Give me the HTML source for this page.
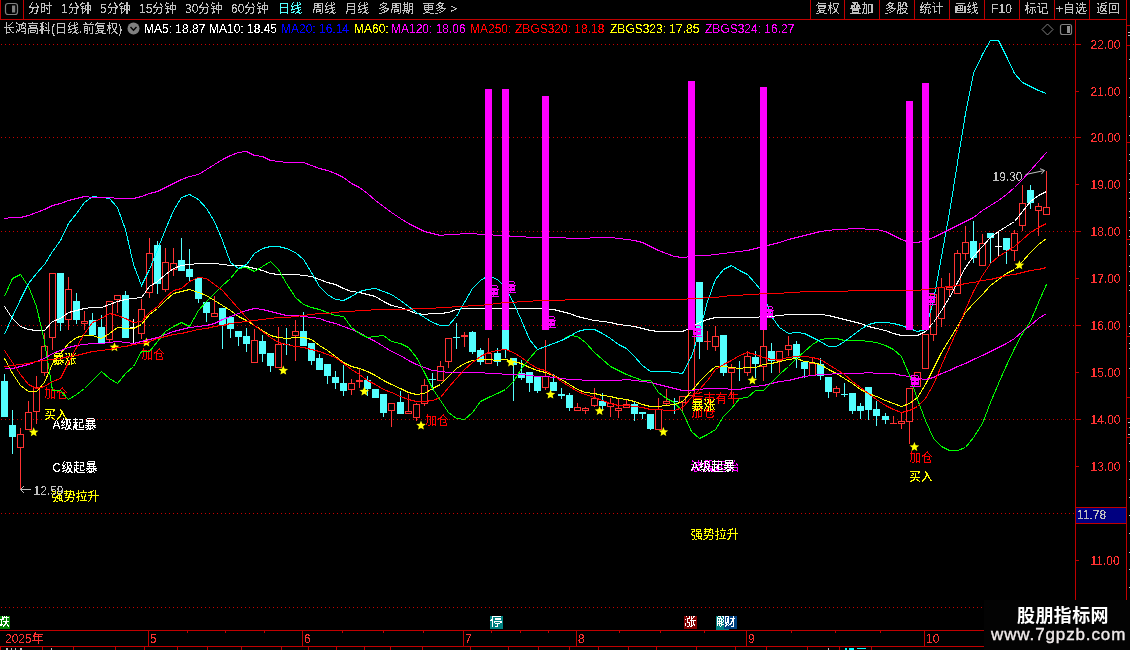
<!DOCTYPE html>
<html lang="zh-CN"><head><meta charset="utf-8"><title>长鸿高科 日线</title>
<style>
html,body{margin:0;padding:0;background:#000;}
body{width:1130px;height:650px;overflow:hidden;position:relative;font-family:"Liberation Sans","Noto Sans CJK SC",sans-serif;font-size:12px;color:#c0c0c0;}
#chart{position:absolute;left:0;top:0;width:1130px;height:650px;}
.t12{font-family:"Liberation Sans","Noto Sans CJK SC",sans-serif;font-size:12px;}
.a12{font-family:"Liberation Sans",sans-serif;font-size:12px;}
.ab{position:absolute;white-space:nowrap;line-height:14px;height:14px;}
#topbar{position:absolute;left:0;top:0;width:1127px;height:19px;border-bottom:1px solid #c00000;box-sizing:content-box;}
.vs{position:absolute;top:0;width:1px;height:19px;background:#c00000;}
.tab,.btn,.ab12,.tag span{filter:url(#thr);}
.tab{position:absolute;top:2px;font-size:12px;line-height:15px;color:#c0c0c0;white-space:nowrap;}
.btn{position:absolute;top:2px;width:35px;text-align:center;font-size:12px;line-height:15px;color:#c0c0c0;white-space:nowrap;}
.tag{position:absolute;top:616px;height:13px;overflow:hidden;color:#fff;font-size:12px;line-height:13px;white-space:nowrap;}
#topbar,#info,#wm,.tag{will-change:transform;}
#wm{position:absolute;left:984px;top:600px;width:146px;height:50px;background:#030303;}
</style></head><body>
<svg id="chart" width="1130" height="650" viewBox="0 0 1130 650" shape-rendering="auto">
<defs><filter id="thr" x="0" y="0" width="100%" height="100%" color-interpolation-filters="sRGB"><feComponentTransfer><feFuncA type="discrete" tableValues="0 0 0 0 1 1 1 1 1"/></feComponentTransfer></filter></defs>
<line x1="1" y1="44.5" x2="1075" y2="44.5" stroke="#c80000" stroke-width="1" stroke-dasharray="1 3" shape-rendering="crispEdges"/>
<line x1="1" y1="137.5" x2="1075" y2="137.5" stroke="#c80000" stroke-width="1" stroke-dasharray="1 3" shape-rendering="crispEdges"/>
<line x1="1" y1="231.5" x2="1075" y2="231.5" stroke="#c80000" stroke-width="1" stroke-dasharray="1 3" shape-rendering="crispEdges"/>
<line x1="1" y1="325.5" x2="1075" y2="325.5" stroke="#c80000" stroke-width="1" stroke-dasharray="1 3" shape-rendering="crispEdges"/>
<line x1="1" y1="419.5" x2="1075" y2="419.5" stroke="#c80000" stroke-width="1" stroke-dasharray="1 3" shape-rendering="crispEdges"/>
<line x1="1" y1="513.5" x2="1075" y2="513.5" stroke="#c80000" stroke-width="1" stroke-dasharray="1 3" shape-rendering="crispEdges"/>
<line x1="1" y1="607.5" x2="984" y2="607.5" stroke="#c80000" stroke-width="1" stroke-dasharray="1 3" shape-rendering="crispEdges"/>
<rect x="4" y="374.0" width="1" height="43.0" fill="#54ffff"/>
<rect x="1" y="381.0" width="7" height="36.0" fill="#54ffff"/>
<rect x="12" y="410.0" width="1" height="44.0" fill="#54ffff"/>
<rect x="9" y="425.0" width="7" height="12.0" fill="#54ffff"/>
<rect x="20" y="428.0" width="1" height="6.0" fill="#ff3232"/>
<rect x="20" y="448.0" width="1" height="41.0" fill="#ff3232"/>
<rect x="17.5" y="434.5" width="6" height="13.0" fill="#000" stroke="#ff3232" stroke-width="1"/>
<rect x="28" y="401.0" width="1" height="11.0" fill="#ff3232"/>
<rect x="25.5" y="412.5" width="6" height="17.0" fill="#000" stroke="#ff3232" stroke-width="1"/>
<rect x="36" y="376.0" width="1" height="11.0" fill="#ff3232"/>
<rect x="36" y="412.0" width="1" height="12.0" fill="#ff3232"/>
<rect x="33.5" y="387.5" width="6" height="24.0" fill="#000" stroke="#ff3232" stroke-width="1"/>
<rect x="44" y="333.0" width="1" height="13.0" fill="#ff3232"/>
<rect x="44" y="373.0" width="1" height="3.0" fill="#ff3232"/>
<rect x="41.5" y="346.5" width="6" height="26.0" fill="#000" stroke="#ff3232" stroke-width="1"/>
<rect x="52" y="338.0" width="1" height="12.0" fill="#ff3232"/>
<rect x="49.5" y="273.5" width="6" height="64.0" fill="#000" stroke="#ff3232" stroke-width="1"/>
<rect x="60" y="273.0" width="1" height="58.0" fill="#54ffff"/>
<rect x="57" y="273.0" width="7" height="50.0" fill="#54ffff"/>
<rect x="68" y="277.0" width="1" height="12.0" fill="#ff3232"/>
<rect x="68" y="320.0" width="1" height="10.0" fill="#ff3232"/>
<rect x="65.5" y="289.5" width="6" height="30.0" fill="#000" stroke="#ff3232" stroke-width="1"/>
<rect x="76" y="293.0" width="1" height="31.0" fill="#54ffff"/>
<rect x="73" y="301.0" width="7" height="19.0" fill="#54ffff"/>
<rect x="84" y="311.0" width="1" height="10.0" fill="#ff3232"/>
<rect x="84" y="324.0" width="1" height="6.0" fill="#ff3232"/>
<rect x="81.5" y="321.5" width="6" height="2.0" fill="#000" stroke="#ff3232" stroke-width="1"/>
<rect x="92" y="313.0" width="1" height="22.0" fill="#54ffff"/>
<rect x="89" y="320.0" width="7" height="15.0" fill="#54ffff"/>
<rect x="101" y="315.0" width="1" height="28.0" fill="#54ffff"/>
<rect x="98" y="327.0" width="7" height="16.0" fill="#54ffff"/>
<rect x="109" y="340.0" width="1" height="2.0" fill="#ff3232"/>
<rect x="106.5" y="301.5" width="6" height="38.0" fill="#000" stroke="#ff3232" stroke-width="1"/>
<rect x="117" y="300.0" width="1" height="13.0" fill="#ff3232"/>
<rect x="114.5" y="295.5" width="6" height="4.0" fill="#000" stroke="#ff3232" stroke-width="1"/>
<rect x="125" y="291.0" width="1" height="47.0" fill="#54ffff"/>
<rect x="122" y="295.0" width="7" height="43.0" fill="#54ffff"/>
<rect x="133" y="319.0" width="1" height="24.0" fill="#ffffff"/>
<rect x="130" y="327" width="7" height="1" fill="#ffffff"/>
<rect x="141" y="299.0" width="1" height="10.0" fill="#ff3232"/>
<rect x="141" y="334.0" width="1" height="5.0" fill="#ff3232"/>
<rect x="138.5" y="309.5" width="6" height="24.0" fill="#000" stroke="#ff3232" stroke-width="1"/>
<rect x="149" y="238.0" width="1" height="15.0" fill="#ff3232"/>
<rect x="149" y="293.0" width="1" height="5.0" fill="#ff3232"/>
<rect x="146.5" y="253.5" width="6" height="39.0" fill="#000" stroke="#ff3232" stroke-width="1"/>
<rect x="157" y="241.0" width="1" height="53.0" fill="#54ffff"/>
<rect x="154" y="245.0" width="7" height="39.0" fill="#54ffff"/>
<rect x="165" y="248.0" width="1" height="14.0" fill="#ff3232"/>
<rect x="165" y="290.0" width="1" height="2.0" fill="#ff3232"/>
<rect x="162.5" y="262.5" width="6" height="27.0" fill="#000" stroke="#ff3232" stroke-width="1"/>
<rect x="173" y="248.0" width="1" height="15.0" fill="#ff3232"/>
<rect x="173" y="270.0" width="1" height="6.0" fill="#ff3232"/>
<rect x="170.5" y="263.5" width="6" height="6.0" fill="#000" stroke="#ff3232" stroke-width="1"/>
<rect x="181" y="238.0" width="1" height="33.0" fill="#54ffff"/>
<rect x="178" y="260.0" width="7" height="11.0" fill="#54ffff"/>
<rect x="189" y="249.0" width="1" height="33.0" fill="#54ffff"/>
<rect x="186" y="269.0" width="7" height="8.0" fill="#54ffff"/>
<rect x="198" y="278.0" width="1" height="25.0" fill="#54ffff"/>
<rect x="195" y="278.0" width="7" height="21.0" fill="#54ffff"/>
<rect x="206" y="302.0" width="1" height="20.0" fill="#54ffff"/>
<rect x="203" y="302.0" width="7" height="11.0" fill="#54ffff"/>
<rect x="214" y="296.0" width="1" height="17.0" fill="#ff3232"/>
<rect x="211.5" y="313.5" width="6" height="3.0" fill="#000" stroke="#ff3232" stroke-width="1"/>
<rect x="222" y="308.0" width="1" height="41.0" fill="#54ffff"/>
<rect x="219" y="308.0" width="7" height="17.0" fill="#54ffff"/>
<rect x="230" y="317.0" width="1" height="21.0" fill="#54ffff"/>
<rect x="227" y="317.0" width="7" height="12.0" fill="#54ffff"/>
<rect x="238" y="331.0" width="1" height="15.0" fill="#54ffff"/>
<rect x="235" y="331.0" width="7" height="6.0" fill="#54ffff"/>
<rect x="246" y="328.0" width="1" height="24.0" fill="#54ffff"/>
<rect x="243" y="336.0" width="7" height="8.0" fill="#54ffff"/>
<rect x="254" y="329.0" width="1" height="11.0" fill="#ff3232"/>
<rect x="251.5" y="340.5" width="6" height="22.0" fill="#000" stroke="#ff3232" stroke-width="1"/>
<rect x="262" y="335.0" width="1" height="27.0" fill="#54ffff"/>
<rect x="259" y="341.0" width="7" height="13.0" fill="#54ffff"/>
<rect x="270" y="353.0" width="1" height="19.0" fill="#54ffff"/>
<rect x="267" y="353.0" width="7" height="13.0" fill="#54ffff"/>
<rect x="278" y="327.0" width="1" height="17.0" fill="#ff3232"/>
<rect x="275.5" y="344.5" width="6" height="23.0" fill="#000" stroke="#ff3232" stroke-width="1"/>
<rect x="286" y="328.0" width="1" height="27.0" fill="#54ffff"/>
<rect x="283" y="344" width="7" height="1" fill="#54ffff"/>
<rect x="295" y="320.0" width="1" height="11.0" fill="#ff3232"/>
<rect x="295" y="336.0" width="1" height="25.0" fill="#ff3232"/>
<rect x="292.5" y="331.5" width="6" height="4.0" fill="#000" stroke="#ff3232" stroke-width="1"/>
<rect x="303" y="312.0" width="1" height="34.0" fill="#54ffff"/>
<rect x="300" y="331.0" width="7" height="15.0" fill="#54ffff"/>
<rect x="311" y="343.0" width="1" height="22.0" fill="#54ffff"/>
<rect x="308" y="343.0" width="7" height="18.0" fill="#54ffff"/>
<rect x="319" y="354.0" width="1" height="16.0" fill="#54ffff"/>
<rect x="316" y="358.0" width="7" height="12.0" fill="#54ffff"/>
<rect x="327" y="364.0" width="1" height="20.0" fill="#54ffff"/>
<rect x="324" y="364.0" width="7" height="12.0" fill="#54ffff"/>
<rect x="335" y="371.0" width="1" height="18.0" fill="#54ffff"/>
<rect x="332" y="377.0" width="7" height="6.0" fill="#54ffff"/>
<rect x="343" y="365.0" width="1" height="31.0" fill="#54ffff"/>
<rect x="340" y="383.0" width="7" height="8.0" fill="#54ffff"/>
<rect x="351" y="379.0" width="1" height="4.0" fill="#ff3232"/>
<rect x="351" y="390.0" width="1" height="5.0" fill="#ff3232"/>
<rect x="348.5" y="383.5" width="6" height="6.0" fill="#000" stroke="#ff3232" stroke-width="1"/>
<rect x="359" y="368.0" width="1" height="12.0" fill="#ff3232"/>
<rect x="359" y="382.0" width="1" height="6.0" fill="#ff3232"/>
<rect x="356.5" y="380.5" width="6" height="1.0" fill="#000" stroke="#ff3232" stroke-width="1"/>
<rect x="367" y="376.0" width="1" height="20.0" fill="#54ffff"/>
<rect x="364" y="380.0" width="7" height="9.0" fill="#54ffff"/>
<rect x="375" y="389.0" width="1" height="9.0" fill="#54ffff"/>
<rect x="372" y="389.0" width="7" height="9.0" fill="#54ffff"/>
<rect x="383" y="394.0" width="1" height="23.0" fill="#54ffff"/>
<rect x="380" y="394.0" width="7" height="19.0" fill="#54ffff"/>
<rect x="391" y="411.0" width="1" height="16.0" fill="#ff3232"/>
<rect x="388.5" y="403.5" width="6" height="7.0" fill="#000" stroke="#ff3232" stroke-width="1"/>
<rect x="400" y="391.0" width="1" height="23.0" fill="#54ffff"/>
<rect x="397" y="402.0" width="7" height="12.0" fill="#54ffff"/>
<rect x="408" y="394.0" width="1" height="17.0" fill="#ff3232"/>
<rect x="405.5" y="411.5" width="6" height="2.0" fill="#000" stroke="#ff3232" stroke-width="1"/>
<rect x="416" y="403.0" width="1" height="1.0" fill="#ff3232"/>
<rect x="416" y="418.0" width="1" height="3.0" fill="#ff3232"/>
<rect x="413.5" y="404.5" width="6" height="13.0" fill="#000" stroke="#ff3232" stroke-width="1"/>
<rect x="424" y="379.0" width="1" height="6.0" fill="#ff3232"/>
<rect x="424" y="404.0" width="1" height="2.0" fill="#ff3232"/>
<rect x="421.5" y="385.5" width="6" height="18.0" fill="#000" stroke="#ff3232" stroke-width="1"/>
<rect x="432" y="373.0" width="1" height="17.0" fill="#54ffff"/>
<rect x="429" y="379" width="7" height="1" fill="#54ffff"/>
<rect x="440" y="361.0" width="1" height="5.0" fill="#ff3232"/>
<rect x="437.5" y="366.5" width="6" height="14.0" fill="#000" stroke="#ff3232" stroke-width="1"/>
<rect x="448" y="362.0" width="1" height="6.0" fill="#ff3232"/>
<rect x="445.5" y="338.5" width="6" height="23.0" fill="#000" stroke="#ff3232" stroke-width="1"/>
<rect x="456" y="323.0" width="1" height="26.0" fill="#54ffff"/>
<rect x="453" y="337" width="7" height="1" fill="#54ffff"/>
<rect x="464" y="332.0" width="1" height="3.0" fill="#ff3232"/>
<rect x="464" y="337.0" width="1" height="10.0" fill="#ff3232"/>
<rect x="461.5" y="335.5" width="6" height="1.0" fill="#000" stroke="#ff3232" stroke-width="1"/>
<rect x="472" y="331.0" width="1" height="23.0" fill="#54ffff"/>
<rect x="469" y="332.0" width="7" height="20.0" fill="#54ffff"/>
<rect x="480" y="348.0" width="1" height="17.0" fill="#54ffff"/>
<rect x="477" y="350.0" width="7" height="12.0" fill="#54ffff"/>
<rect x="488" y="338.0" width="1" height="15.0" fill="#ff3232"/>
<rect x="485.5" y="353.5" width="6" height="10.0" fill="#000" stroke="#ff3232" stroke-width="1"/>
<rect x="497" y="348.0" width="1" height="18.0" fill="#54ffff"/>
<rect x="494" y="353.0" width="7" height="9.0" fill="#54ffff"/>
<rect x="505" y="330.0" width="1" height="28.0" fill="#54ffff"/>
<rect x="502" y="330.0" width="7" height="20.0" fill="#54ffff"/>
<rect x="513" y="358.0" width="1" height="43.0" fill="#54ffff"/>
<rect x="510" y="358.0" width="7" height="7.0" fill="#54ffff"/>
<rect x="521" y="360.0" width="1" height="20.0" fill="#54ffff"/>
<rect x="518" y="373.0" width="7" height="5.0" fill="#54ffff"/>
<rect x="529" y="372.0" width="1" height="20.0" fill="#54ffff"/>
<rect x="526" y="372.0" width="7" height="11.0" fill="#54ffff"/>
<rect x="537" y="376.0" width="1" height="17.0" fill="#54ffff"/>
<rect x="534" y="376.0" width="7" height="15.0" fill="#54ffff"/>
<rect x="545" y="340.0" width="1" height="36.0" fill="#ff3232"/>
<rect x="545" y="388.0" width="1" height="2.0" fill="#ff3232"/>
<rect x="542.5" y="376.5" width="6" height="11.0" fill="#000" stroke="#ff3232" stroke-width="1"/>
<rect x="553" y="374.0" width="1" height="17.0" fill="#54ffff"/>
<rect x="550" y="382.0" width="7" height="9.0" fill="#54ffff"/>
<rect x="561" y="388.0" width="1" height="11.0" fill="#54ffff"/>
<rect x="558" y="394.0" width="7" height="2.0" fill="#54ffff"/>
<rect x="569" y="393.0" width="1" height="18.0" fill="#54ffff"/>
<rect x="566" y="395.0" width="7" height="13.0" fill="#54ffff"/>
<rect x="577" y="403.0" width="1" height="4.0" fill="#ff3232"/>
<rect x="574.5" y="407.5" width="6" height="3.0" fill="#000" stroke="#ff3232" stroke-width="1"/>
<rect x="585" y="407.0" width="1" height="1.0" fill="#ff3232"/>
<rect x="585" y="411.0" width="1" height="3.0" fill="#ff3232"/>
<rect x="582.5" y="408.5" width="6" height="2.0" fill="#000" stroke="#ff3232" stroke-width="1"/>
<rect x="594" y="388.0" width="1" height="10.0" fill="#ff3232"/>
<rect x="594" y="406.0" width="1" height="1.0" fill="#ff3232"/>
<rect x="591.5" y="398.5" width="6" height="7.0" fill="#000" stroke="#ff3232" stroke-width="1"/>
<rect x="602" y="393.0" width="1" height="18.0" fill="#54ffff"/>
<rect x="599" y="401.0" width="7" height="5.0" fill="#54ffff"/>
<rect x="610" y="398.0" width="1" height="5.0" fill="#ff3232"/>
<rect x="610" y="407.0" width="1" height="10.0" fill="#ff3232"/>
<rect x="607.5" y="403.5" width="6" height="3.0" fill="#000" stroke="#ff3232" stroke-width="1"/>
<rect x="618" y="399.0" width="1" height="9.0" fill="#ff3232"/>
<rect x="618" y="411.0" width="1" height="7.0" fill="#ff3232"/>
<rect x="615.5" y="408.5" width="6" height="2.0" fill="#000" stroke="#ff3232" stroke-width="1"/>
<rect x="626" y="400.0" width="1" height="4.0" fill="#ff3232"/>
<rect x="623.5" y="404.5" width="6" height="3.0" fill="#000" stroke="#ff3232" stroke-width="1"/>
<rect x="634" y="402.0" width="1" height="19.0" fill="#54ffff"/>
<rect x="631" y="404.0" width="7" height="10.0" fill="#54ffff"/>
<rect x="642" y="412.0" width="1" height="7.0" fill="#54ffff"/>
<rect x="639" y="412.0" width="7" height="2.0" fill="#54ffff"/>
<rect x="650" y="414.0" width="1" height="16.0" fill="#54ffff"/>
<rect x="647" y="414.0" width="7" height="15.0" fill="#54ffff"/>
<rect x="658" y="398.0" width="1" height="11.0" fill="#ff3232"/>
<rect x="655.5" y="409.5" width="6" height="20.0" fill="#000" stroke="#ff3232" stroke-width="1"/>
<rect x="666" y="389.0" width="1" height="12.0" fill="#ff3232"/>
<rect x="666" y="404.0" width="1" height="1.0" fill="#ff3232"/>
<rect x="663.5" y="401.5" width="6" height="2.0" fill="#000" stroke="#ff3232" stroke-width="1"/>
<rect x="674" y="398.0" width="1" height="16.0" fill="#54ffff"/>
<rect x="671" y="401" width="7" height="1" fill="#54ffff"/>
<rect x="682" y="403.0" width="1" height="8.0" fill="#ff3232"/>
<rect x="679.5" y="396.5" width="6" height="6.0" fill="#000" stroke="#ff3232" stroke-width="1"/>
<rect x="688.5" y="318.5" width="6" height="77.0" fill="#000" stroke="#ff3232" stroke-width="1"/>
<rect x="699" y="282.0" width="1" height="77.0" fill="#54ffff"/>
<rect x="696" y="282.0" width="7" height="60.0" fill="#54ffff"/>
<rect x="707" y="331.0" width="1" height="19.0" fill="#ff3232"/>
<rect x="704" y="341" width="7" height="1" fill="#ff3232"/>
<rect x="715" y="326.0" width="1" height="10.0" fill="#ff3232"/>
<rect x="715" y="347.0" width="1" height="4.0" fill="#ff3232"/>
<rect x="712.5" y="336.5" width="6" height="10.0" fill="#000" stroke="#ff3232" stroke-width="1"/>
<rect x="723" y="335.0" width="1" height="41.0" fill="#54ffff"/>
<rect x="720" y="335.0" width="7" height="38.0" fill="#54ffff"/>
<rect x="731" y="364.0" width="1" height="4.0" fill="#ff3232"/>
<rect x="731" y="373.0" width="1" height="25.0" fill="#ff3232"/>
<rect x="728.5" y="368.5" width="6" height="4.0" fill="#000" stroke="#ff3232" stroke-width="1"/>
<rect x="739" y="361.0" width="1" height="20.0" fill="#54ffff"/>
<rect x="736" y="368" width="7" height="1" fill="#54ffff"/>
<rect x="747" y="351.0" width="1" height="5.0" fill="#ff3232"/>
<rect x="747" y="373.0" width="1" height="3.0" fill="#ff3232"/>
<rect x="744.5" y="356.5" width="6" height="16.0" fill="#000" stroke="#ff3232" stroke-width="1"/>
<rect x="755" y="351.0" width="1" height="27.0" fill="#54ffff"/>
<rect x="752" y="357.0" width="7" height="7.0" fill="#54ffff"/>
<rect x="763" y="330.0" width="1" height="16.0" fill="#ff3232"/>
<rect x="763" y="367.0" width="1" height="14.0" fill="#ff3232"/>
<rect x="760.5" y="346.5" width="6" height="20.0" fill="#000" stroke="#ff3232" stroke-width="1"/>
<rect x="771" y="343.0" width="1" height="30.0" fill="#54ffff"/>
<rect x="768" y="351.0" width="7" height="10.0" fill="#54ffff"/>
<rect x="779" y="361.0" width="1" height="12.0" fill="#ff3232"/>
<rect x="776.5" y="351.5" width="6" height="9.0" fill="#000" stroke="#ff3232" stroke-width="1"/>
<rect x="788" y="336.0" width="1" height="9.0" fill="#ff3232"/>
<rect x="788" y="350.0" width="1" height="6.0" fill="#ff3232"/>
<rect x="785.5" y="345.5" width="6" height="4.0" fill="#000" stroke="#ff3232" stroke-width="1"/>
<rect x="796" y="341.0" width="1" height="27.0" fill="#54ffff"/>
<rect x="793" y="344.0" width="7" height="14.0" fill="#54ffff"/>
<rect x="804" y="362.0" width="1" height="16.0" fill="#54ffff"/>
<rect x="801" y="362.0" width="7" height="7.0" fill="#54ffff"/>
<rect x="812" y="358.0" width="1" height="5.0" fill="#ff3232"/>
<rect x="809.5" y="363.5" width="6" height="12.0" fill="#000" stroke="#ff3232" stroke-width="1"/>
<rect x="820" y="358.0" width="1" height="22.0" fill="#54ffff"/>
<rect x="817" y="364.0" width="7" height="12.0" fill="#54ffff"/>
<rect x="828" y="377.0" width="1" height="21.0" fill="#54ffff"/>
<rect x="825" y="377.0" width="7" height="15.0" fill="#54ffff"/>
<rect x="836" y="386.0" width="1" height="2.0" fill="#ff3232"/>
<rect x="836" y="393.0" width="1" height="4.0" fill="#ff3232"/>
<rect x="833.5" y="388.5" width="6" height="4.0" fill="#000" stroke="#ff3232" stroke-width="1"/>
<rect x="844" y="383.0" width="1" height="14.0" fill="#54ffff"/>
<rect x="841" y="394" width="7" height="1" fill="#54ffff"/>
<rect x="852" y="393.0" width="1" height="21.0" fill="#54ffff"/>
<rect x="849" y="393.0" width="7" height="18.0" fill="#54ffff"/>
<rect x="860" y="403.0" width="1" height="16.0" fill="#54ffff"/>
<rect x="857" y="406.0" width="7" height="5.0" fill="#54ffff"/>
<rect x="868" y="387.0" width="1" height="33.0" fill="#54ffff"/>
<rect x="865" y="387.0" width="7" height="23.0" fill="#54ffff"/>
<rect x="876" y="401.0" width="1" height="25.0" fill="#54ffff"/>
<rect x="873" y="409.0" width="7" height="7.0" fill="#54ffff"/>
<rect x="885" y="413.0" width="1" height="11.0" fill="#54ffff"/>
<rect x="882" y="416.0" width="7" height="4.0" fill="#54ffff"/>
<rect x="893" y="416.0" width="1" height="8.0" fill="#ff3232"/>
<rect x="890" y="423" width="7" height="1" fill="#ff3232"/>
<rect x="901" y="412.0" width="1" height="9.0" fill="#ff3232"/>
<rect x="901" y="424.0" width="1" height="5.0" fill="#ff3232"/>
<rect x="898.5" y="421.5" width="6" height="2.0" fill="#000" stroke="#ff3232" stroke-width="1"/>
<rect x="909" y="422.0" width="1" height="22.0" fill="#ff3232"/>
<rect x="906.5" y="388.5" width="6" height="33.0" fill="#000" stroke="#ff3232" stroke-width="1"/>
<rect x="914.5" y="372.5" width="6" height="14.0" fill="#000" stroke="#ff3232" stroke-width="1"/>
<rect x="922.5" y="334.5" width="6" height="34.0" fill="#000" stroke="#ff3232" stroke-width="1"/>
<rect x="933" y="335.0" width="1" height="6.0" fill="#ff3232"/>
<rect x="930.5" y="294.5" width="6" height="40.0" fill="#000" stroke="#ff3232" stroke-width="1"/>
<rect x="941" y="278.0" width="1" height="9.0" fill="#ff3232"/>
<rect x="941" y="319.0" width="1" height="8.0" fill="#ff3232"/>
<rect x="938.5" y="287.5" width="6" height="31.0" fill="#000" stroke="#ff3232" stroke-width="1"/>
<rect x="949" y="273.0" width="1" height="14.0" fill="#ff3232"/>
<rect x="949" y="290.0" width="1" height="7.0" fill="#ff3232"/>
<rect x="946.5" y="287.5" width="6" height="2.0" fill="#000" stroke="#ff3232" stroke-width="1"/>
<rect x="957" y="250.0" width="1" height="3.0" fill="#ff3232"/>
<rect x="954.5" y="253.5" width="6" height="40.0" fill="#000" stroke="#ff3232" stroke-width="1"/>
<rect x="965" y="226.0" width="1" height="16.0" fill="#ff3232"/>
<rect x="965" y="254.0" width="1" height="6.0" fill="#ff3232"/>
<rect x="962.5" y="242.5" width="6" height="11.0" fill="#000" stroke="#ff3232" stroke-width="1"/>
<rect x="973" y="221.0" width="1" height="42.0" fill="#54ffff"/>
<rect x="970" y="241.0" width="7" height="17.0" fill="#54ffff"/>
<rect x="982" y="234.0" width="1" height="9.0" fill="#ff3232"/>
<rect x="979.5" y="243.5" width="6" height="22.0" fill="#000" stroke="#ff3232" stroke-width="1"/>
<rect x="990" y="233.0" width="1" height="30.0" fill="#54ffff"/>
<rect x="987" y="233.0" width="7" height="5.0" fill="#54ffff"/>
<rect x="998" y="231.0" width="1" height="25.0" fill="#ffffff"/>
<rect x="995" y="246" width="7" height="1" fill="#ffffff"/>
<rect x="1006" y="238.0" width="1" height="26.0" fill="#54ffff"/>
<rect x="1003" y="238.0" width="7" height="12.0" fill="#54ffff"/>
<rect x="1014" y="230.0" width="1" height="3.0" fill="#ff3232"/>
<rect x="1014" y="251.0" width="1" height="10.0" fill="#ff3232"/>
<rect x="1011.5" y="233.5" width="6" height="17.0" fill="#000" stroke="#ff3232" stroke-width="1"/>
<rect x="1022" y="185.0" width="1" height="18.0" fill="#ff3232"/>
<rect x="1022" y="226.0" width="1" height="5.0" fill="#ff3232"/>
<rect x="1019.5" y="203.5" width="6" height="22.0" fill="#000" stroke="#ff3232" stroke-width="1"/>
<rect x="1030" y="185.0" width="1" height="24.0" fill="#54ffff"/>
<rect x="1027" y="190.0" width="7" height="13.0" fill="#54ffff"/>
<rect x="1038" y="203.0" width="1" height="3.0" fill="#ff3232"/>
<rect x="1038" y="211.0" width="1" height="25.0" fill="#ff3232"/>
<rect x="1035.5" y="206.5" width="6" height="4.0" fill="#000" stroke="#ff3232" stroke-width="1"/>
<rect x="1046" y="171.0" width="1" height="36.0" fill="#ff3232"/>
<rect x="1043.5" y="207.5" width="6" height="7.0" fill="#000" stroke="#ff3232" stroke-width="1"/>
<polygon points="33.7,427.2 35.0,430.4 38.5,430.7 35.8,432.9 36.6,436.2 33.7,434.4 30.8,436.2 31.6,432.9 28.9,430.7 32.4,430.4" fill="#ffff00"/>
<polygon points="114.5,342.3 115.8,345.5 119.3,345.8 116.6,348.0 117.4,351.3 114.5,349.6 111.6,351.3 112.4,348.0 109.7,345.8 113.2,345.5" fill="#ffff00"/>
<polygon points="146.4,337.5 147.7,340.7 151.2,341.0 148.5,343.2 149.3,346.5 146.4,344.8 143.5,346.5 144.3,343.2 141.6,341.0 145.1,340.7" fill="#ffff00"/>
<polygon points="283.3,365.6 284.6,368.8 288.1,369.1 285.4,371.3 286.2,374.6 283.3,372.9 280.4,374.6 281.2,371.3 278.5,369.1 282.0,368.8" fill="#ffff00"/>
<polygon points="364.3,386.5 365.6,389.7 369.1,390.0 366.4,392.2 367.2,395.5 364.3,393.8 361.4,395.5 362.2,392.2 359.5,390.0 363.0,389.7" fill="#ffff00"/>
<polygon points="421.0,420.6 422.3,423.8 425.8,424.1 423.1,426.3 423.9,429.6 421.0,427.9 418.1,429.6 418.9,426.3 416.2,424.1 419.7,423.8" fill="#ffff00"/>
<polygon points="511.0,357.5 512.3,360.7 515.8,361.0 513.1,363.2 513.9,366.5 511.0,364.8 508.1,366.5 508.9,363.2 506.2,361.0 509.7,360.7" fill="#ffff00"/>
<polygon points="550.5,389.6 551.8,392.8 555.3,393.1 552.6,395.3 553.4,398.6 550.5,396.9 547.6,398.6 548.4,395.3 545.7,393.1 549.2,392.8" fill="#ffff00"/>
<polygon points="599.6,406.0 600.9,409.2 604.4,409.5 601.7,411.7 602.5,415.0 599.6,413.2 596.7,415.0 597.5,411.7 594.8,409.5 598.3,409.2" fill="#ffff00"/>
<polygon points="663.4,427.0 664.7,430.2 668.2,430.5 665.5,432.7 666.3,436.0 663.4,434.2 660.5,436.0 661.3,432.7 658.6,430.5 662.1,430.2" fill="#ffff00"/>
<polygon points="752.4,375.4 753.7,378.6 757.2,378.9 754.5,381.1 755.3,384.4 752.4,382.6 749.5,384.4 750.3,381.1 747.6,378.9 751.1,378.6" fill="#ffff00"/>
<polygon points="914.4,442.0 915.7,445.2 919.2,445.5 916.5,447.7 917.3,451.0 914.4,449.2 911.5,451.0 912.3,447.7 909.6,445.5 913.1,445.2" fill="#ffff00"/>
<polygon points="1019.4,260.2 1020.7,263.4 1024.2,263.7 1021.5,265.9 1022.3,269.2 1019.4,267.4 1016.5,269.2 1017.3,265.9 1014.6,263.7 1018.1,263.4" fill="#ffff00"/>
<text x="52.5" y="364" class="t12" fill="#ffff00" filter="url(#thr)">暴涨</text>
<text x="44" y="397.5" class="t12" fill="#ff0000" filter="url(#thr)">加仓</text>
<text x="44" y="419" class="t12" fill="#ffff00" filter="url(#thr)">买入</text>
<text x="52.5" y="428.5" class="t12" fill="#ffffff" filter="url(#thr)">A级起暴</text>
<text x="52.5" y="471.5" class="t12" fill="#ffffff" filter="url(#thr)">C级起暴</text>
<text x="51.5" y="500.5" class="t12" fill="#ffff00" filter="url(#thr)">强势拉升</text>
<text x="141" y="358.5" class="t12" fill="#ff0000" filter="url(#thr)">加仓</text>
<text x="425" y="424.5" class="t12" fill="#ff0000" filter="url(#thr)">加仓</text>
<text x="691.5" y="416.5" class="t12" fill="#ff0000" filter="url(#thr)">加仓</text>
<text x="691.5" y="402.5" class="t12" fill="#ff0000" filter="url(#thr)">后市有牛</text>
<text x="691.5" y="409.5" class="t12" fill="#ffff00" filter="url(#thr)">暴涨</text>
<text x="690.7" y="471" class="t12" fill="#ff00ff" filter="url(#thr)">波段起始</text>
<text x="691" y="471" class="t12" fill="#ffffff" filter="url(#thr)">A级起暴</text>
<text x="690.7" y="538.5" class="t12" fill="#ffff00" filter="url(#thr)">强势拉升</text>
<text x="909" y="461.5" class="t12" fill="#ff0000" filter="url(#thr)">加仓</text>
<text x="909" y="480.6" class="t12" fill="#ffff00" filter="url(#thr)">买入</text>
<polyline points="4.5,306.5 12.5,318.5 20.5,326.5 28.5,329.5 36.5,330.5 44.5,330.5 52.5,321.5 60.5,318.5 68.5,312.5 76.5,310.5 84.5,308.5 92.5,307.5 101.5,307.5 109.5,304.5 117.5,301.5 125.5,299.5 133.5,298.5 141.5,297.5 149.5,286.5 157.5,281.5 165.5,274.5 173.5,268.5 181.5,265.5 189.5,264.5 198.5,263.5 206.5,263.5 214.5,263.5 222.5,264.5 230.5,265.5 238.5,265.5 246.5,266.5 254.5,268.5 262.5,270.5 270.5,273.5 278.5,274.5 286.5,274.5 295.5,274.5 303.5,275.5 311.5,276.5 319.5,279.5 327.5,282.5 335.5,284.5 343.5,288.5 351.5,291.5 359.5,292.5 367.5,294.5 375.5,296.5 383.5,301.5 391.5,305.5 400.5,307.5 408.5,310.5 416.5,313.5 424.5,314.5 432.5,313.5 440.5,313.5 448.5,312.5 456.5,309.5 464.5,308.5 472.5,308.5 480.5,308.5 488.5,308.5 497.5,308.5 505.5,308.5 513.5,308.5 521.5,308.5 529.5,308.5 537.5,308.5 545.5,309.5 553.5,309.5 561.5,311.5 569.5,313.5 577.5,316.5 585.5,318.5 594.5,320.5 602.5,321.5 610.5,322.5 618.5,324.5 626.5,325.5 634.5,326.5 642.5,328.5 650.5,330.5 658.5,331.5 666.5,331.5 674.5,331.5 682.5,331.5 691.5,327.5 699.5,322.5 707.5,319.5 715.5,317.5 723.5,317.5 731.5,317.5 739.5,317.5 747.5,317.5 755.5,317.5 763.5,316.5 771.5,316.5 779.5,315.5 788.5,314.5 796.5,314.5 804.5,314.5 812.5,314.5 820.5,314.5 828.5,315.5 836.5,317.5 844.5,319.5 852.5,321.5 860.5,323.5 868.5,326.5 876.5,328.5 885.5,330.5 893.5,333.5 901.5,335.5 909.5,335.5 917.5,335.5 925.5,331.5 933.5,322.5 941.5,310.5 949.5,297.5 957.5,282.5 965.5,267.5 973.5,256.5 982.5,246.5 990.5,237.5 998.5,231.5 1006.5,226.5 1014.5,221.5 1022.5,211.5 1030.5,201.5 1038.5,195.5 1046.5,191.5" fill="none" stroke="#ffffff" stroke-width="1" shape-rendering="crispEdges"/>
<polyline points="4.5,358.5 12.5,373.5 20.5,385.5 28.5,391.5 36.5,391.5 44.5,382.5 52.5,363.5 60.5,353.5 68.5,343.5 76.5,337.5 84.5,335.5 92.5,335.5 101.5,338.5 109.5,333.5 117.5,327.5 125.5,328.5 133.5,328.5 141.5,324.5 149.5,314.5 157.5,308.5 165.5,300.5 173.5,293.5 181.5,291.5 189.5,289.5 198.5,292.5 206.5,295.5 214.5,300.5 222.5,305.5 230.5,310.5 238.5,316.5 246.5,320.5 254.5,325.5 262.5,330.5 270.5,335.5 278.5,337.5 286.5,338.5 295.5,337.5 303.5,337.5 311.5,339.5 319.5,345.5 327.5,350.5 335.5,356.5 343.5,362.5 351.5,366.5 359.5,368.5 367.5,371.5 375.5,375.5 383.5,380.5 391.5,384.5 400.5,388.5 408.5,392.5 416.5,394.5 424.5,393.5 432.5,388.5 440.5,384.5 448.5,376.5 456.5,368.5 464.5,363.5 472.5,360.5 480.5,359.5 488.5,359.5 497.5,360.5 505.5,359.5 513.5,361.5 521.5,363.5 529.5,367.5 537.5,370.5 545.5,372.5 553.5,375.5 561.5,379.5 569.5,384.5 577.5,389.5 585.5,392.5 594.5,393.5 602.5,395.5 610.5,396.5 618.5,398.5 626.5,399.5 634.5,401.5 642.5,404.5 650.5,406.5 658.5,406.5 666.5,405.5 674.5,404.5 682.5,401.5 691.5,391.5 699.5,381.5 707.5,373.5 715.5,366.5 723.5,366.5 731.5,367.5 739.5,368.5 747.5,367.5 755.5,367.5 763.5,364.5 771.5,363.5 779.5,361.5 788.5,359.5 796.5,358.5 804.5,361.5 812.5,362.5 820.5,364.5 828.5,369.5 836.5,373.5 844.5,378.5 852.5,383.5 860.5,389.5 868.5,393.5 876.5,396.5 885.5,400.5 893.5,403.5 901.5,406.5 909.5,403.5 917.5,397.5 925.5,384.5 933.5,368.5 941.5,352.5 949.5,339.5 957.5,326.5 965.5,312.5 973.5,303.5 982.5,294.5 990.5,285.5 998.5,279.5 1006.5,273.5 1014.5,269.5 1022.5,261.5 1030.5,252.5 1038.5,244.5 1046.5,238.5" fill="none" stroke="#ffff00" stroke-width="1" shape-rendering="crispEdges"/>
<polyline points="4.5,368.5 12.5,368.5 20.5,366.5 28.5,364.5 36.5,361.5 44.5,358.5 52.5,353.5 60.5,350.5 68.5,347.5 76.5,345.5 84.5,344.5 92.5,343.5 101.5,343.5 109.5,342.5 117.5,341.5 125.5,342.5 133.5,343.5 141.5,341.5 149.5,339.5 157.5,337.5 165.5,334.5 173.5,331.5 181.5,329.5 189.5,327.5 198.5,326.5 206.5,325.5 214.5,323.5 222.5,319.5 230.5,316.5 238.5,313.5 246.5,310.5 254.5,308.5 262.5,309.5 270.5,311.5 278.5,313.5 286.5,315.5 295.5,315.5 303.5,316.5 311.5,317.5 319.5,318.5 327.5,321.5 335.5,323.5 343.5,326.5 351.5,329.5 359.5,332.5 367.5,337.5 375.5,341.5 383.5,346.5 391.5,351.5 400.5,355.5 408.5,360.5 416.5,364.5 424.5,367.5 432.5,370.5 440.5,371.5 448.5,372.5 456.5,372.5 464.5,372.5 472.5,372.5 480.5,372.5 488.5,373.5 497.5,373.5 505.5,374.5 513.5,374.5 521.5,374.5 529.5,375.5 537.5,376.5 545.5,376.5 553.5,377.5 561.5,378.5 569.5,379.5 577.5,379.5 585.5,380.5 594.5,380.5 602.5,380.5 610.5,380.5 618.5,380.5 626.5,379.5 634.5,380.5 642.5,381.5 650.5,382.5 658.5,384.5 666.5,386.5 674.5,388.5 682.5,390.5 691.5,390.5 699.5,389.5 707.5,388.5 715.5,388.5 723.5,388.5 731.5,389.5 739.5,389.5 747.5,387.5 755.5,386.5 763.5,385.5 771.5,383.5 779.5,381.5 788.5,380.5 796.5,378.5 804.5,376.5 812.5,375.5 820.5,374.5 828.5,374.5 836.5,373.5 844.5,373.5 852.5,373.5 860.5,373.5 868.5,372.5 876.5,373.5 885.5,373.5 893.5,373.5 901.5,375.5 909.5,376.5 917.5,378.5 925.5,379.5 933.5,377.5 941.5,373.5 949.5,370.5 957.5,366.5 965.5,363.5 973.5,359.5 982.5,355.5 990.5,351.5 998.5,347.5 1006.5,343.5 1014.5,338.5 1022.5,331.5 1030.5,325.5 1038.5,318.5 1046.5,313.5" fill="none" stroke="#ff00ff" stroke-width="1" shape-rendering="crispEdges"/>
<polyline points="4.5,296.5 12.5,278.5 20.5,274.5 28.5,286.5 36.5,306.5 44.5,341.5 52.5,390.5 60.5,390.5 68.5,399.5 76.5,394.5 84.5,388.5 92.5,380.5 101.5,371.5 109.5,378.5 117.5,383.5 125.5,373.5 133.5,366.5 141.5,351.5 149.5,351.5 157.5,341.5 165.5,331.5 173.5,326.5 181.5,322.5 189.5,326.5 198.5,310.5 206.5,301.5 214.5,293.5 222.5,285.5 230.5,278.5 238.5,268.5 246.5,267.5 254.5,271.5 262.5,266.5 270.5,261.5 278.5,269.5 286.5,283.5 295.5,297.5 303.5,304.5 311.5,307.5 319.5,309.5 327.5,312.5 335.5,315.5 343.5,316.5 351.5,327.5 359.5,333.5 367.5,337.5 375.5,336.5 383.5,335.5 391.5,341.5 400.5,343.5 408.5,347.5 416.5,357.5 424.5,372.5 432.5,388.5 440.5,400.5 448.5,412.5 456.5,418.5 464.5,419.5 472.5,412.5 480.5,401.5 488.5,397.5 497.5,393.5 505.5,389.5 513.5,381.5 521.5,368.5 529.5,358.5 537.5,349.5 545.5,346.5 553.5,343.5 561.5,340.5 569.5,335.5 577.5,336.5 585.5,342.5 594.5,352.5 602.5,359.5 610.5,366.5 618.5,370.5 626.5,374.5 634.5,377.5 642.5,380.5 650.5,380.5 658.5,392.5 666.5,398.5 674.5,402.5 682.5,411.5 691.5,431.5 699.5,438.5 707.5,434.5 715.5,429.5 723.5,416.5 731.5,408.5 739.5,398.5 747.5,397.5 755.5,390.5 763.5,390.5 771.5,382.5 779.5,374.5 788.5,366.5 796.5,358.5 804.5,351.5 812.5,344.5 820.5,339.5 828.5,338.5 836.5,338.5 844.5,340.5 852.5,340.5 860.5,340.5 868.5,341.5 876.5,342.5 885.5,345.5 893.5,349.5 901.5,356.5 909.5,375.5 917.5,399.5 925.5,420.5 933.5,438.5 941.5,446.5 949.5,450.5 957.5,450.5 965.5,447.5 973.5,437.5 982.5,423.5 990.5,402.5 998.5,383.5 1006.5,365.5 1014.5,348.5 1022.5,333.5 1030.5,321.5 1038.5,302.5 1046.5,284.5" fill="none" stroke="#00ff00" stroke-width="1" shape-rendering="crispEdges"/>
<polyline points="4.5,334.5 12.5,316.5 20.5,299.5 28.5,283.5 36.5,273.5 44.5,264.5 52.5,251.5 60.5,240.5 68.5,223.5 76.5,213.5 84.5,202.5 92.5,196.5 101.5,197.5 109.5,198.5 117.5,207.5 125.5,229.5 133.5,264.5 141.5,285.5 149.5,269.5 157.5,249.5 165.5,229.5 173.5,210.5 181.5,197.5 189.5,194.5 198.5,199.5 206.5,208.5 214.5,221.5 222.5,240.5 230.5,262.5 238.5,268.5 246.5,264.5 254.5,253.5 262.5,248.5 270.5,246.5 278.5,246.5 286.5,248.5 295.5,252.5 303.5,259.5 311.5,272.5 319.5,286.5 327.5,294.5 335.5,299.5 343.5,300.5 351.5,296.5 359.5,291.5 367.5,289.5 375.5,288.5 383.5,291.5 391.5,294.5 400.5,300.5 408.5,306.5 416.5,312.5 424.5,317.5 432.5,322.5 440.5,325.5 448.5,325.5 456.5,316.5 464.5,302.5 472.5,288.5 480.5,280.5 488.5,275.5 497.5,279.5 505.5,287.5 513.5,302.5 521.5,320.5 529.5,339.5 537.5,349.5 545.5,346.5 553.5,343.5 561.5,340.5 569.5,336.5 577.5,331.5 585.5,329.5 594.5,329.5 602.5,333.5 610.5,338.5 618.5,344.5 626.5,348.5 634.5,356.5 642.5,365.5 650.5,371.5 658.5,371.5 666.5,371.5 674.5,372.5 682.5,373.5 691.5,356.5 699.5,331.5 707.5,301.5 715.5,279.5 723.5,269.5 731.5,265.5 739.5,270.5 747.5,274.5 755.5,283.5 763.5,293.5 771.5,316.5 779.5,327.5 788.5,333.5 796.5,332.5 804.5,333.5 812.5,337.5 820.5,341.5 828.5,346.5 836.5,346.5 844.5,341.5 852.5,335.5 860.5,329.5 868.5,324.5 876.5,322.5 885.5,322.5 893.5,323.5 901.5,325.5 909.5,328.5 917.5,331.5 925.5,329.5 933.5,300.5 941.5,256.5 949.5,212.5 957.5,162.5 965.5,113.5 973.5,73.5 982.5,54.5 990.5,40.5 998.5,40.5 1006.5,56.5 1014.5,73.5 1022.5,82.5 1030.5,86.5 1038.5,90.5 1046.5,93.5" fill="none" stroke="#00ffff" stroke-width="1" shape-rendering="crispEdges"/>
<polyline points="4.5,218.5 12.5,217.5 20.5,217.5 28.5,215.5 36.5,212.5 44.5,209.5 52.5,205.5 60.5,203.5 68.5,200.5 76.5,198.5 84.5,196.5 92.5,197.5 101.5,197.5 109.5,197.5 117.5,198.5 125.5,198.5 133.5,198.5 141.5,196.5 149.5,193.5 157.5,191.5 165.5,187.5 173.5,183.5 181.5,179.5 189.5,176.5 198.5,174.5 206.5,169.5 214.5,164.5 222.5,159.5 230.5,155.5 238.5,152.5 246.5,151.5 254.5,155.5 262.5,156.5 270.5,160.5 278.5,161.5 286.5,162.5 295.5,162.5 303.5,162.5 311.5,165.5 319.5,168.5 327.5,170.5 335.5,173.5 343.5,177.5 351.5,183.5 359.5,187.5 367.5,193.5 375.5,200.5 383.5,206.5 391.5,212.5 400.5,218.5 408.5,223.5 416.5,227.5 424.5,231.5 432.5,233.5 440.5,235.5 448.5,234.5 456.5,234.5 464.5,233.5 472.5,233.5 480.5,234.5 488.5,234.5 497.5,235.5 505.5,235.5 513.5,236.5 521.5,236.5 529.5,237.5 537.5,237.5 545.5,237.5 553.5,237.5 561.5,237.5 569.5,238.5 577.5,238.5 585.5,238.5 594.5,237.5 602.5,237.5 610.5,237.5 618.5,238.5 626.5,239.5 634.5,240.5 642.5,242.5 650.5,246.5 658.5,250.5 666.5,253.5 674.5,256.5 682.5,257.5 691.5,256.5 699.5,255.5 707.5,255.5 715.5,254.5 723.5,253.5 731.5,252.5 739.5,251.5 747.5,250.5 755.5,248.5 763.5,246.5 771.5,244.5 779.5,242.5 788.5,239.5 796.5,237.5 804.5,235.5 812.5,233.5 820.5,231.5 828.5,230.5 836.5,229.5 844.5,229.5 852.5,228.5 860.5,228.5 868.5,229.5 876.5,229.5 885.5,231.5 893.5,235.5 901.5,239.5 909.5,242.5 917.5,242.5 925.5,240.5 933.5,237.5 941.5,233.5 949.5,229.5 957.5,225.5 965.5,221.5 973.5,217.5 982.5,210.5 990.5,205.5 998.5,200.5 1006.5,194.5 1014.5,187.5 1022.5,179.5 1030.5,170.5 1038.5,161.5 1046.5,152.5" fill="none" stroke="#ff00ff" stroke-width="1" shape-rendering="crispEdges"/>
<text x="488" y="295.5" class="t12" fill="#ff00ff" filter="url(#thr)">量</text>
<text x="505" y="291.5" class="t12" fill="#ff00ff" filter="url(#thr)">量</text>
<text x="545" y="326.5" class="t12" fill="#ff00ff" filter="url(#thr)">量</text>
<text x="691" y="335.5" class="t12" fill="#ff00ff" filter="url(#thr)">量</text>
<text x="763" y="316.5" class="t12" fill="#ff00ff" filter="url(#thr)">量</text>
<text x="909" y="385.5" class="t12" fill="#ff00ff" filter="url(#thr)">量</text>
<text x="925" y="303.5" class="t12" fill="#ff00ff" filter="url(#thr)">量</text>
<rect x="485" y="89" width="7" height="241" fill="#ff00ff"/>
<rect x="502" y="89" width="7" height="241" fill="#ff00ff"/>
<rect x="542" y="96" width="7" height="234" fill="#ff00ff"/>
<rect x="688" y="81" width="7" height="249" fill="#ff00ff"/>
<rect x="760" y="87" width="7" height="243" fill="#ff00ff"/>
<rect x="906" y="101" width="7" height="229" fill="#ff00ff"/>
<rect x="922" y="83" width="7" height="247" fill="#ff00ff"/>
<polyline points="4.5,366.5 12.5,365.5 20.5,364.5 28.5,363.5 36.5,361.5 44.5,360.5 52.5,359.5 60.5,358.5 68.5,356.5 76.5,355.5 84.5,353.5 92.5,351.5 101.5,350.5 109.5,349.5 117.5,347.5 125.5,346.5 133.5,344.5 141.5,343.5 149.5,341.5 157.5,338.5 165.5,336.5 173.5,334.5 181.5,333.5 189.5,331.5 198.5,329.5 206.5,328.5 214.5,326.5 222.5,325.5 230.5,323.5 238.5,322.5 246.5,321.5 254.5,320.5 262.5,319.5 270.5,318.5 278.5,317.5 286.5,317.5 295.5,316.5 303.5,315.5 311.5,314.5 319.5,313.5 327.5,313.5 335.5,312.5 343.5,311.5 351.5,311.5 359.5,310.5 367.5,310.5 375.5,309.5 383.5,309.5 391.5,309.5 400.5,309.5 408.5,309.5 416.5,308.5 424.5,308.5 432.5,308.5 440.5,307.5 448.5,307.5 456.5,306.5 464.5,306.5 472.5,305.5 480.5,305.5 488.5,304.5 497.5,303.5 505.5,302.5 513.5,302.5 521.5,301.5 529.5,301.5 537.5,300.5 545.5,300.5 553.5,300.5 561.5,300.5 569.5,299.5 577.5,299.5 585.5,299.5 594.5,299.5 602.5,299.5 610.5,299.5 618.5,299.5 626.5,299.5 634.5,299.5 642.5,299.5 650.5,299.5 658.5,299.5 666.5,299.5 674.5,299.5 682.5,299.5 691.5,298.5 699.5,298.5 707.5,297.5 715.5,297.5 723.5,296.5 731.5,295.5 739.5,295.5 747.5,294.5 755.5,294.5 763.5,293.5 771.5,293.5 779.5,293.5 788.5,292.5 796.5,292.5 804.5,291.5 812.5,291.5 820.5,291.5 828.5,291.5 836.5,291.5 844.5,291.5 852.5,290.5 860.5,290.5 868.5,290.5 876.5,290.5 885.5,290.5 893.5,290.5 901.5,290.5 909.5,290.5 917.5,290.5 925.5,289.5 933.5,288.5 941.5,287.5 949.5,286.5 957.5,285.5 965.5,283.5 973.5,282.5 982.5,280.5 990.5,279.5 998.5,277.5 1006.5,275.5 1014.5,274.5 1022.5,272.5 1030.5,270.5 1038.5,269.5 1046.5,267.5" fill="none" stroke="#ff0000" stroke-width="1" shape-rendering="crispEdges"/>
<polyline points="4.5,350.5 12.5,362.5 20.5,374.5 28.5,384.5 36.5,388.5 44.5,386.5 52.5,381.5 60.5,378.5 68.5,362.5 76.5,347.5 84.5,333.5 92.5,322.5 101.5,318.5 109.5,313.5 117.5,315.5 125.5,318.5 133.5,322.5 141.5,321.5 149.5,312.5 157.5,306.5 165.5,297.5 173.5,290.5 181.5,288.5 189.5,281.5 198.5,277.5 206.5,278.5 214.5,284.5 222.5,290.5 230.5,299.5 238.5,308.5 246.5,317.5 254.5,325.5 262.5,331.5 270.5,337.5 278.5,342.5 286.5,344.5 295.5,346.5 303.5,347.5 311.5,349.5 319.5,351.5 327.5,354.5 335.5,357.5 343.5,363.5 351.5,369.5 359.5,374.5 367.5,380.5 375.5,384.5 383.5,389.5 391.5,392.5 400.5,396.5 408.5,399.5 416.5,401.5 424.5,401.5 432.5,400.5 440.5,397.5 448.5,387.5 456.5,378.5 464.5,369.5 472.5,362.5 480.5,356.5 488.5,352.5 497.5,350.5 505.5,349.5 513.5,352.5 521.5,357.5 529.5,363.5 537.5,368.5 545.5,370.5 553.5,375.5 561.5,381.5 569.5,386.5 577.5,391.5 585.5,394.5 594.5,397.5 602.5,400.5 610.5,403.5 618.5,405.5 626.5,405.5 634.5,406.5 642.5,407.5 650.5,409.5 658.5,409.5 666.5,410.5 674.5,410.5 682.5,407.5 691.5,397.5 699.5,389.5 707.5,380.5 715.5,369.5 723.5,364.5 731.5,360.5 739.5,355.5 747.5,352.5 755.5,354.5 763.5,357.5 771.5,359.5 779.5,359.5 788.5,357.5 796.5,356.5 804.5,356.5 812.5,357.5 820.5,359.5 828.5,364.5 836.5,369.5 844.5,374.5 852.5,381.5 860.5,387.5 868.5,393.5 876.5,399.5 885.5,405.5 893.5,409.5 901.5,412.5 909.5,410.5 917.5,406.5 925.5,398.5 933.5,384.5 941.5,365.5 949.5,347.5 957.5,329.5 965.5,309.5 973.5,291.5 982.5,275.5 990.5,263.5 998.5,256.5 1006.5,251.5 1014.5,246.5 1022.5,239.5 1030.5,232.5 1038.5,227.5 1046.5,223.5" fill="none" stroke="#ff0000" stroke-width="1" shape-rendering="crispEdges"/>
<text x="33.5" y="494.6" class="a12" fill="#c0c0c0" filter="url(#thr)">12.59</text>
<path d="M20.5 489.5 H31 M20.5 489.5 l3.5 -3.5 M20.5 489.5 l3.5 3.5" stroke="#c0c0c0" fill="none" stroke-width="1"/>
<text x="992.5" y="180.5" class="a12" fill="#c0c0c0" filter="url(#thr)">19.30</text>
<path d="M1025.5 174.5 L1044.5 170.5 l-4.5 -1.8 M1044.5 170.5 l-3.2 3.6" stroke="#c0c0c0" fill="none" stroke-width="1"/>
<rect x="1075" y="19" width="1" height="581" fill="#c00000"/>
<rect x="1126" y="0" width="1" height="600" fill="#c00000"/>
<rect x="1076" y="44" width="5" height="1" fill="#c00000"/>
<text x="1090.5" y="49" class="a12" fill="#ff3232" filter="url(#thr)">22.00</text>
<rect x="1076" y="91" width="3" height="1" fill="#c00000"/>
<text x="1090.5" y="96" class="a12" fill="#ff3232" filter="url(#thr)">21.00</text>
<rect x="1076" y="137" width="5" height="1" fill="#c00000"/>
<text x="1090.5" y="142" class="a12" fill="#ff3232" filter="url(#thr)">20.00</text>
<rect x="1076" y="184" width="3" height="1" fill="#c00000"/>
<text x="1090.5" y="189" class="a12" fill="#ff3232" filter="url(#thr)">19.00</text>
<rect x="1076" y="231" width="5" height="1" fill="#c00000"/>
<text x="1090.5" y="236" class="a12" fill="#ff3232" filter="url(#thr)">18.00</text>
<rect x="1076" y="278" width="3" height="1" fill="#c00000"/>
<text x="1090.5" y="283" class="a12" fill="#ff3232" filter="url(#thr)">17.00</text>
<rect x="1076" y="325" width="5" height="1" fill="#c00000"/>
<text x="1090.5" y="330" class="a12" fill="#ff3232" filter="url(#thr)">16.00</text>
<rect x="1076" y="372" width="3" height="1" fill="#c00000"/>
<text x="1090.5" y="377" class="a12" fill="#ff3232" filter="url(#thr)">15.00</text>
<rect x="1076" y="419" width="5" height="1" fill="#c00000"/>
<text x="1090.5" y="424" class="a12" fill="#ff3232" filter="url(#thr)">14.00</text>
<rect x="1076" y="466" width="3" height="1" fill="#c00000"/>
<text x="1090.5" y="471" class="a12" fill="#ff3232" filter="url(#thr)">13.00</text>
<rect x="1076" y="513" width="5" height="1" fill="#c00000"/>
<rect x="1076" y="560" width="3" height="1" fill="#c00000"/>
<text x="1090.5" y="565" class="a12" fill="#ff3232" filter="url(#thr)">11.00</text>
<rect x="1075.5" y="507.5" width="51" height="16" fill="#000080" stroke="#c00000" stroke-width="1"/>
<text x="1077" y="519" class="a12" fill="#c0c0c0" filter="url(#thr)">11.78</text>
<rect x="1127" y="25" width="3" height="1" fill="#c00000"/>
<rect x="1127" y="45" width="3" height="1" fill="#c00000"/>
<rect x="1127" y="142" width="3" height="1" fill="#c00000"/>
<rect x="1127" y="239" width="3" height="1" fill="#c00000"/>
<rect x="1127" y="336" width="3" height="1" fill="#c00000"/>
<rect x="1127" y="397" width="3" height="1" fill="#c00000"/>
<rect x="1127" y="418" width="3" height="1" fill="#c00000"/>
<rect x="1127" y="437" width="3" height="1" fill="#c00000"/>
<rect x="1128" y="32" width="2" height="1" fill="#c0c0c0"/>
<rect x="1128" y="35" width="2" height="1" fill="#c0c0c0"/>
<rect x="1128" y="422" width="2" height="1" fill="#c0c0c0"/>
<rect x="1128" y="434" width="2" height="1" fill="#c0c0c0"/>
<rect x="1129" y="59" width="1" height="1" fill="#c0c0c0"/>
<rect x="1129" y="78" width="1" height="1" fill="#c0c0c0"/>
<rect x="1129" y="97" width="1" height="1" fill="#c0c0c0"/>
<rect x="1129" y="116" width="1" height="1" fill="#c0c0c0"/>
<rect x="1129" y="135" width="1" height="1" fill="#c0c0c0"/>
<rect x="1129" y="154" width="1" height="1" fill="#c0c0c0"/>
<rect x="1129" y="160" width="1" height="1" fill="#c0c0c0"/>
<rect x="1129" y="173" width="1" height="1" fill="#c0c0c0"/>
<rect x="1129" y="179" width="1" height="1" fill="#c0c0c0"/>
<rect x="1129" y="192" width="1" height="1" fill="#c0c0c0"/>
<rect x="1129" y="198" width="1" height="1" fill="#c0c0c0"/>
<rect x="1129" y="211" width="1" height="1" fill="#c0c0c0"/>
<rect x="1129" y="217" width="1" height="1" fill="#c0c0c0"/>
<rect x="1129" y="230" width="1" height="1" fill="#c0c0c0"/>
<rect x="1129" y="236" width="1" height="1" fill="#c0c0c0"/>
<rect x="1129" y="244" width="1" height="1" fill="#c0c0c0"/>
<rect x="1129" y="255" width="1" height="1" fill="#c0c0c0"/>
<rect x="1129" y="266" width="1" height="1" fill="#c0c0c0"/>
<rect x="1129" y="271" width="1" height="1" fill="#c0c0c0"/>
<rect x="1129" y="285" width="1" height="1" fill="#c0c0c0"/>
<rect x="1129" y="290" width="1" height="1" fill="#c0c0c0"/>
<rect x="1129" y="313" width="1" height="1" fill="#c0c0c0"/>
<rect x="1129" y="326" width="1" height="1" fill="#c0c0c0"/>
<rect x="1129" y="333" width="1" height="1" fill="#c0c0c0"/>
<rect x="1129" y="343" width="1" height="1" fill="#c0c0c0"/>
<rect x="1129" y="348" width="1" height="1" fill="#c0c0c0"/>
<rect x="1129" y="368" width="1" height="1" fill="#c0c0c0"/>
<rect x="1129" y="427" width="1" height="1" fill="#c0c0c0"/>
<rect x="1129" y="443" width="1" height="1" fill="#c0c0c0"/>
<rect x="1129" y="461" width="1" height="1" fill="#c0c0c0"/>
<rect x="1129" y="479" width="1" height="1" fill="#c0c0c0"/>
<rect x="1129" y="497" width="1" height="1" fill="#c0c0c0"/>
<rect x="1129" y="515" width="1" height="1" fill="#c0c0c0"/>
<rect x="1129" y="533" width="1" height="1" fill="#c0c0c0"/>
<rect x="1129" y="552" width="1" height="1" fill="#c0c0c0"/>
<rect x="1129" y="569" width="1" height="1" fill="#c0c0c0"/>
<rect x="1129" y="587" width="1" height="1" fill="#c0c0c0"/>
<rect x="0" y="630" width="984" height="1" fill="#c00000"/>
<rect x="0" y="646" width="984" height="1" fill="#c00000"/>
<rect x="148" y="630" width="1" height="16" fill="#c00000"/>
<text x="150" y="643" class="a12" fill="#ff3232" filter="url(#thr)">5</text>
<rect x="302" y="630" width="1" height="16" fill="#c00000"/>
<text x="304" y="643" class="a12" fill="#ff3232" filter="url(#thr)">6</text>
<rect x="463" y="630" width="1" height="16" fill="#c00000"/>
<text x="465" y="643" class="a12" fill="#ff3232" filter="url(#thr)">7</text>
<rect x="576" y="630" width="1" height="16" fill="#c00000"/>
<text x="578" y="643" class="a12" fill="#ff3232" filter="url(#thr)">8</text>
<rect x="746" y="630" width="1" height="16" fill="#c00000"/>
<text x="748" y="643" class="a12" fill="#ff3232" filter="url(#thr)">9</text>
<rect x="924" y="630" width="1" height="16" fill="#c00000"/>
<text x="926" y="643" class="a12" fill="#ff3232" filter="url(#thr)">10</text>
<text x="5" y="643" class="t12" fill="#ff3232" filter="url(#thr)">2025年</text>
<rect x="187" y="631" width="1" height="2" fill="#c00000"/>
<rect x="225" y="631" width="1" height="2" fill="#c00000"/>
<rect x="264" y="631" width="1" height="2" fill="#c00000"/>
<rect x="342" y="631" width="1" height="2" fill="#c00000"/>
<rect x="383" y="631" width="1" height="2" fill="#c00000"/>
<rect x="423" y="631" width="1" height="2" fill="#c00000"/>
<rect x="491" y="631" width="1" height="2" fill="#c00000"/>
<rect x="520" y="631" width="1" height="2" fill="#c00000"/>
<rect x="548" y="631" width="1" height="2" fill="#c00000"/>
<rect x="619" y="631" width="1" height="2" fill="#c00000"/>
<rect x="660" y="631" width="1" height="2" fill="#c00000"/>
<rect x="704" y="631" width="1" height="2" fill="#c00000"/>
<rect x="791" y="631" width="1" height="2" fill="#c00000"/>
<rect x="835" y="631" width="1" height="2" fill="#c00000"/>
<rect x="880" y="631" width="1" height="2" fill="#c00000"/>
<rect x="42" y="647" width="1" height="3" fill="#c00000"/>
<rect x="73" y="647" width="1" height="3" fill="#c00000"/>
<rect x="115" y="647" width="1" height="3" fill="#c00000"/>
<rect x="144" y="647" width="1" height="3" fill="#c00000"/>
<rect x="177" y="647" width="1" height="3" fill="#c00000"/>
<rect x="207" y="647" width="1" height="3" fill="#c00000"/>
<rect x="241" y="647" width="1" height="3" fill="#c00000"/>
<rect x="281" y="647" width="1" height="3" fill="#c00000"/>
<rect x="308" y="647" width="1" height="3" fill="#c00000"/>
<rect x="336" y="647" width="1" height="3" fill="#c00000"/>
<rect x="364" y="647" width="1" height="3" fill="#c00000"/>
<rect x="390" y="647" width="1" height="3" fill="#c00000"/>
<rect x="422" y="647" width="1" height="3" fill="#c00000"/>
<rect x="470" y="647" width="1" height="3" fill="#c00000"/>
<rect x="508" y="647" width="1" height="3" fill="#c00000"/>
<rect x="538" y="647" width="1" height="3" fill="#c00000"/>
<rect x="569" y="647" width="1" height="3" fill="#c00000"/>
<rect x="598" y="647" width="1" height="3" fill="#c00000"/>
<rect x="628" y="647" width="1" height="3" fill="#c00000"/>
<rect x="656" y="647" width="1" height="3" fill="#c00000"/>
<rect x="696" y="647" width="1" height="3" fill="#c00000"/>
<rect x="735" y="647" width="1" height="3" fill="#c00000"/>
<rect x="766" y="647" width="1" height="3" fill="#c00000"/>
<rect x="807" y="647" width="1" height="3" fill="#c00000"/>
<rect x="839" y="647" width="1" height="3" fill="#c00000"/>
<rect x="871" y="647" width="1" height="3" fill="#c00000"/>
<rect x="845" y="648" width="2" height="2" fill="#00ffff"/>
<rect x="849" y="648" width="5" height="2" fill="#00ffff"/>
<rect x="857" y="648" width="9" height="1" fill="#00ffff"/>
<rect x="6" y="648" width="2" height="2" fill="#c0c0c0"/>
<rect x="11" y="648" width="1" height="2" fill="#c0c0c0"/>
<rect x="15" y="648" width="1" height="2" fill="#c0c0c0"/>
<rect x="20" y="648" width="2" height="2" fill="#c0c0c0"/>
<rect x="51" y="648" width="1" height="2" fill="#c0c0c0"/>
<rect x="828" y="648" width="1" height="2" fill="#c0c0c0"/>
<rect x="0" y="646" width="1" height="4" fill="#c00000"/>
</svg>
<div id="topbar">
<div class="vs" style="left:0"></div><div class="vs" style="left:23px"></div>
<svg style="position:absolute;left:4px;top:2px" width="15" height="14" viewBox="0 0 15 14"><rect x="1.5" y="1.5" width="12" height="11" rx="2.5" fill="none" stroke="#808080" stroke-width="1.2"/><rect x="8" y="3.5" width="3.2" height="7" fill="#808080"/></svg>
<span class="tab" style="left:28px">分时</span>
<span class="tab" style="left:61px">1分钟</span>
<span class="tab" style="left:100px">5分钟</span>
<span class="tab" style="left:139px">15分钟</span>
<span class="tab" style="left:185px">30分钟</span>
<span class="tab" style="left:231px">60分钟</span>
<span class="tab" style="left:278px;color:#54ffff">日线</span>
<span class="tab" style="left:312px">周线</span>
<span class="tab" style="left:345px">月线</span>
<span class="tab" style="left:378px">多周期</span>
<span class="tab" style="left:422.5px">更多</span><span class="tab" style="left:450px">&gt;</span>
<div class="vs" style="left:810px"></div><span class="btn" style="left:810px">复权</span>
<div class="vs" style="left:844px"></div><span class="btn" style="left:844px">叠加</span>
<div class="vs" style="left:879px"></div><span class="btn" style="left:879px">多股</span>
<div class="vs" style="left:914px"></div><span class="btn" style="left:914px">统计</span>
<div class="vs" style="left:949px"></div><span class="btn" style="left:949px">画线</span>
<div class="vs" style="left:984px"></div><span class="btn" style="left:984px">F10</span>
<div class="vs" style="left:1019px"></div><span class="btn" style="left:1019px">标记</span>
<div class="vs" style="left:1054px"></div><span class="btn" style="left:1054px">+自选</span>
<div class="vs" style="left:1089px"></div><span class="btn" style="left:1090px;width:36px">返回</span>
</div>
<div id="info">
<span class="ab ab12" style="left:3px;top:22px">长鸿高科(日线.前复权)</span>
<svg style="position:absolute;left:127px;top:22px" width="13" height="13" viewBox="0 0 13 13"><circle cx="6.5" cy="6.5" r="6" fill="#808080"/><path d="M3.5 5 L6.5 8.2 L9.5 5" fill="none" stroke="#000" stroke-width="1.4"/></svg>
<span class="ab ab12" style="left:144px;top:22px;color:#fff">MA5: 18.87</span>
<span class="ab ab12" style="left:209px;top:22px;color:#fff">MA10: 18.45</span>
<span class="ab ab12" style="left:281px;top:22px;color:#0000ff">MA20: 16.14</span>
<span class="ab ab12" style="left:354px;top:22px;color:#ffff00">MA60:</span>
<span class="ab ab12" style="left:391px;top:22px;color:#ff00ff">MA120: 18.06</span>
<span class="ab ab12" style="left:470px;top:22px;color:#ff0000">MA250:</span>
<span class="ab ab12" style="left:515px;top:22px;color:#ff0000">ZBGS320: 18.18</span>
<span class="ab ab12" style="left:610px;top:22px;color:#ffff00">ZBGS323: 17.85</span>
<span class="ab ab12" style="left:705px;top:22px;color:#ff00ff">ZBGS324: 16.27</span>
<svg style="position:absolute;left:1040px;top:22px" width="34" height="15" viewBox="0 0 34 15"><path d="M7.5 2 L13 7.5 L7.5 13 L2 7.5 Z" fill="none" stroke="#808080" stroke-width="1"/><rect x="20.5" y="2.5" width="11" height="10" rx="2" fill="none" stroke="#808080" stroke-width="1.2"/><rect x="27" y="4" width="3" height="7" fill="#909090"/></svg>
</div>
<div class="tag" style="left:0;width:10px;background:#008000"><span style="margin-left:-2px">跌</span></div>
<div class="tag" style="left:490px;width:13px;background:#008080"><span>停</span></div>
<div class="tag" style="left:684px;width:13px;background:#800000"><span>涨</span></div>
<div class="tag" style="left:716px;width:13px;background:#008080;height:14px"><span>解</span></div>
<div class="tag" style="left:724px;width:13px;background:#004080"><span>财</span></div>
<div id="wm">
<span class="ab" style="left:33px;top:4.5px;font-size:18px;line-height:22px;height:22px;font-weight:bold;color:#fff;letter-spacing:0.4px;font-family:'Liberation Sans','Noto Sans CJK SC',sans-serif">股朋指标网</span>
<span class="ab" style="left:7px;top:23.7px;font-size:17px;line-height:22px;height:22px;color:#f0eaea;letter-spacing:0.88px;-webkit-text-stroke:0.35px #f0eaea;font-family:'Liberation Sans',sans-serif">www.7gpzb.com</span>
</div>
</body></html>
